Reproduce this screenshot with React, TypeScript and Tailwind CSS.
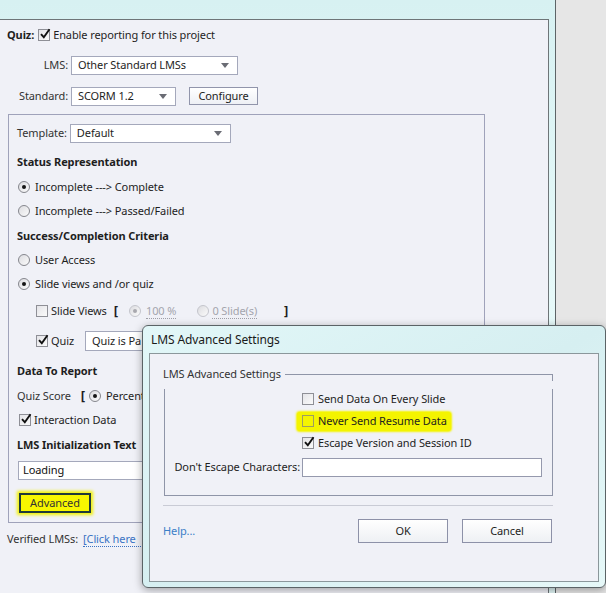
import React from 'react';

const font = { fontFamily: '"Noto Sans", "Open Sans", sans-serif', letterSpacing: '-0.1px' };

function Check({ checked = false, className = '' }: { checked?: boolean; className?: string }) {
  return (
    <span
      className={`relative inline-block h-[12px] w-[12px] shrink-0 border border-[#8e8f96] bg-gradient-to-br from-[#e4e4e8] to-[#fafafa] ${className}`}
    >
      {checked ? (
        <svg viewBox="0 0 12 12" className="absolute left-[0px] top-[-2px] h-[12px] w-[12px]">
          <path d="M2 6.2 L4.8 9.2 L10.5 1.2" fill="none" stroke="#111" strokeWidth="1.9" />
        </svg>
      ) : null}
    </span>
  );
}

function Radio({ checked = false, disabled = false }: { checked?: boolean; disabled?: boolean }) {
  return (
    <span
      className={`flex h-[12px] w-[12px] shrink-0 items-center justify-center rounded-full border bg-gradient-to-br from-[#dcdce0] to-[#fbfbfb] ${
        disabled ? 'border-[#c4c5cc]' : 'border-[#85868d]'
      }`}
    >
      {checked ? (
        <span className={`h-[4px] w-[4px] rounded-full ${disabled ? 'bg-[#a8a8ae]' : 'bg-[#151515]'}`} />
      ) : null}
    </span>
  );
}

function Select({ value, className = '', arrow = true }: { value: string; className?: string; arrow?: boolean }) {
  return (
    <div
      className={`flex items-center justify-between whitespace-nowrap border border-[#a4a8bb] bg-white pl-[6px] pr-[8px] text-[11px] text-[#1e1e1e] ${className}`}
    >
      <span>{value}</span>
      {arrow ? (
        <span className="h-0 w-0 border-x-[4px] border-t-[5px] border-x-transparent border-t-[#6a6c74]" />
      ) : null}
    </div>
  );
}

function Heading({ children, className = '' }: { children: React.ReactNode; className?: string }) {
  return (
    <div className={`flex h-[20px] items-center whitespace-nowrap text-[11px] font-bold text-[#1e1e1e] ${className}`}>
      {children}
    </div>
  );
}

function Row({ children, className = '' }: { children: React.ReactNode; className?: string }) {
  return (
    <div className={`flex h-[20px] items-center whitespace-nowrap text-[11px] text-[#1e1e1e] ${className}`}>
      {children}
    </div>
  );
}

function MainWindow() {
  return (
    <div className="h-[593px] w-[556px] shrink-0 border-r border-[#5d6467] bg-gradient-to-b from-[#d7f1f2] via-[#e6f9f9] to-[#dff4f4] pr-[6px] pt-[19px]">
      <div className="h-full border-r border-t border-[#6e7578] bg-[#f0f1f7] pl-[7px]">
        <Row className="mt-[5px]">
          <span className="font-bold">Quiz:</span>
          <Check checked className="ml-[4px]" />
          <span className="ml-[3px]">Enable reporting for this project</span>
        </Row>
        <Row className="mt-[10px]">
          <span className="w-[61px] text-right text-[#333]">LMS:</span>
          <Select value="Other Standard LMSs" className="ml-[3px] h-[19px] w-[167px]" />
        </Row>
        <Row className="mt-[11px]">
          <span className="w-[61px] text-right text-[#333]">Standard:</span>
          <Select value="SCORM 1.2" className="ml-[3px] h-[19px] w-[105px]" />
          <div className="ml-[13px] flex h-[18px] w-[69px] items-center justify-center border border-[#9195ab] bg-gradient-to-b from-[#ffffff] to-[#eef0f5]">
            Configure
          </div>
        </Row>

        <div className="ml-[1px] mt-[8px] w-[477px] border border-[#9fa2ba] pb-[9px] pl-[8px]">
          <Row className="mt-[8px]">
            <span className="text-[#333]">Template:</span>
            <Select value="Default" className="ml-[3px] h-[19px] w-[161px]" />
          </Row>
          <Heading className="mt-[9px]">Status Representation</Heading>
          <Row className="mt-[5px] pl-[1px]">
            <Radio checked />
            <span className="ml-[5px]">Incomplete ---&gt; Complete</span>
          </Row>
          <Row className="mt-[4px] pl-[1px]">
            <Radio />
            <span className="ml-[5px]">Incomplete ---&gt; Passed/Failed</span>
          </Row>
          <Heading className="mt-[5px]">Success/Completion Criteria</Heading>
          <Row className="mt-[4px] pl-[1px]">
            <Radio />
            <span className="ml-[5px]">User Access</span>
          </Row>
          <Row className="mt-[4px] pl-[1px]">
            <Radio checked />
            <span className="ml-[5px]">Slide views and /or quiz</span>
          </Row>
          <Row className="mt-[7px] pl-[19px]">
            <Check />
            <span className="ml-[3px]">Slide Views</span>
            <span className="ml-[7px] text-[13px] font-bold">[</span>
            <span className="ml-[11px]">
              <Radio checked disabled />
            </span>
            <span className="ml-[5px] border-b border-dotted border-[#a0a0a8] leading-[14px] text-[#a4a5ad]">100 %</span>
            <span className="ml-[21px]">
              <Radio disabled />
            </span>
            <span className="ml-[3px] border-b border-dotted border-[#a0a0a8] leading-[14px] text-[#a4a5ad]">0 Slide(s)</span>
            <span className="ml-[27px] text-[13px] font-bold">]</span>
          </Row>
          <Row className="mt-[10px] pl-[19px]">
            <Check checked />
            <span className="ml-[3px]">Quiz</span>
            <Select value="Quiz is Pa" arrow={false} className="ml-[11px] h-[20px] w-[80px]" />
          </Row>
          <Heading className="mt-[10px]">Data To Report</Heading>
          <Row className="mt-[5px]">
            <span className="text-[#333]">Quiz Score</span>
            <span className="ml-[10px] text-[13px] font-bold">[</span>
            <span className="ml-[4px]">
              <Radio checked />
            </span>
            <span className="ml-[5px]">Percent</span>
          </Row>
          <Row className="mt-[4px] pl-[2px]">
            <Check checked />
            <span className="ml-[3px]">Interaction Data</span>
          </Row>
          <Heading className="mt-[5px]">LMS Initialization Text</Heading>
          <div className="ml-[1px] mt-[6px] flex h-[19px] w-[150px] items-center border border-[#a4a8bb] bg-white pl-[4px] text-[11px] text-[#111]">
            Loading
          </div>
          <div className="ml-[2px] mt-[13px] flex h-[20px] w-[72px] items-center justify-center border-2 border-[#1f3a3a] bg-[#f7f700] text-[11px] text-[#333] shadow-[0_0_3px_2px_#f2f200]">
            Advanced
          </div>
        </div>

        <Row className="mt-[6px]">
          <span className="text-[#333]">Verified LMSs:</span>
          <span className="ml-[5px] w-[70px] border-b border-dotted border-[#3b73c4] leading-[15px] text-[#3b73c4]">
            [Click here
          </span>
        </Row>
      </div>
    </div>
  );
}

function AdvancedDialog() {
  return (
    <div className="absolute left-[142px] top-[325px] h-[263px] w-[464px] rounded-[6px] border border-[#5b6366] bg-gradient-to-br from-[#e2f7f8] via-[#d6eff1] to-[#e6f8f8] px-[6px] pb-[5px] shadow-[0_2px_8px_rgba(0,0,0,0.35)]">
      <div className="flex h-[27px] items-center pl-[2px] text-[12px] text-[#1a1a1a]">LMS Advanced Settings</div>
      <div className="h-[229px] whitespace-nowrap border border-[#8b979b] bg-[#f0f1f7] text-[11px] text-[#1e1e1e]">
        <div className="ml-[13px] mt-[13px] flex h-[14px] w-[390px] items-center">
          <span className="text-[#333]">LMS Advanced Settings</span>
          <div className="ml-[4px] mt-[7px] h-[7px] flex-1 border-r border-t border-[#8f95a8]" />
        </div>
        <div className="ml-[14px] h-[107px] w-[389px] border-b border-l border-r border-[#8f95a8]">
          <div className="mt-[8px] flex h-[20px] items-center pl-[137px]">
            <Check />
            <span className="ml-[4px]">Send Data On Every Slide</span>
          </div>
          <div className="mt-[2px] flex h-[20px] items-center pl-[137px]">
            <div className="-ml-[5px] flex h-[19px] items-center rounded-[3px] bg-[#f4f400] pl-[5px] pr-[4px] shadow-[0_0_2px_1px_#f4f400]">
              <span className="h-[12px] w-[12px] border border-[#9d9d62]" />
              <span className="ml-[4px]">Never Send Resume Data</span>
            </div>
          </div>
          <div className="mt-[2px] flex h-[20px] items-center pl-[137px]">
            <Check checked />
            <span className="ml-[4px]">Escape Version and Session ID</span>
          </div>
          <div className="mt-[5px] flex h-[19px] items-center pl-[8px]">
            <span className="w-[127px] text-right">Don't Escape Characters:</span>
            <div className="ml-[2px] h-[19px] w-[240px] border border-[#9599ad] bg-white" />
          </div>
        </div>
        <div className="ml-[13px] mt-[9px] h-px w-[390px] bg-[#c9cbd5]" />
        <div className="ml-[13px] mt-[13px] flex h-[24px] w-[389px] items-center">
          <span className="text-[#3b7fc8]">Help...</span>
          <div className="flex-1" />
          <div className="flex h-[24px] w-[90px] items-center justify-center border border-[#8d91a8] bg-gradient-to-b from-[#ffffff] to-[#eef0f4]">
            OK
          </div>
          <div className="ml-[14px] flex h-[24px] w-[90px] items-center justify-center border border-[#8d91a8] bg-gradient-to-b from-[#ffffff] to-[#eef0f4]">
            Cancel
          </div>
        </div>
      </div>
    </div>
  );
}

export default function App() {
  return (
    <div className="relative flex h-[593px] w-[606px] overflow-hidden bg-[#e6e6e6]" style={font}>
      <MainWindow />
      <AdvancedDialog />
    </div>
  );
}
